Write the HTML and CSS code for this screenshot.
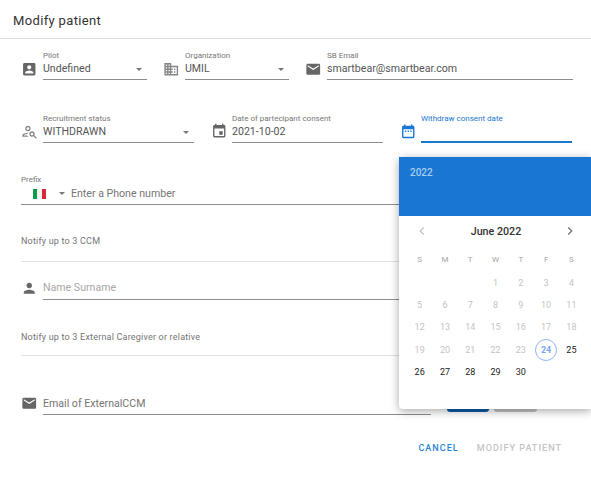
FILE: index.html
```html
<!DOCTYPE html>
<html>
  <head>
    <title>Modify patient</title>
    <meta name="viewport" content="width=device-width, initial-scale=1" />
    <link rel="stylesheet" href="styles.css">
  </head>
  <body>
    <div class="dialog">
      <h1 class="dialog-title">Modify patient</h1>

      <div class="row row-first">
        <div class="group">
          <svg class="icon" viewBox="0 0 24 24"><path d="M3 5v14c0 1.1.89 2 2 2h14c1.1 0 2-.9 2-2V5c0-1.1-.9-2-2-2H5c-1.11 0-2 .9-2 2zm12 4c0 1.66-1.34 3-3 3s-3-1.34-3-3 1.34-3 3-3 3 1.34 3 3zm-9 8c0-2 4-3.1 6-3.1s6 1.1 6 3.1v1H6v-1z"/></svg>
          <div class="field w-small">
            <span class="field-label">Pilot</span>
            <div class="field-value">Undefined<span class="caret"></span></div>
          </div>
        </div>
        <div class="group">
          <svg class="icon icon-light" viewBox="0 0 24 24"><path d="M12 7V3H2v18h20V7H12zM6 19H4v-2h2v2zm0-4H4v-2h2v2zm0-4H4V9h2v2zm0-4H4V5h2v2zm4 12H8v-2h2v2zm0-4H8v-2h2v2zm0-4H8V9h2v2zm0-4H8V5h2v2zm10 12h-8v-2h2v-2h-2v-2h2v-2h-2V9h8v10zm-2-8h-2v2h2v-2zm0 4h-2v2h2v-2z"/></svg>
          <div class="field w-small">
            <span class="field-label">Organization</span>
            <div class="field-value">UMIL<span class="caret"></span></div>
          </div>
        </div>
        <div class="group">
          <svg class="icon" viewBox="0 0 24 24"><path d="M20 4H4c-1.1 0-1.99.9-1.99 2L2 18c0 1.1.9 2 2 2h16c1.1 0 2-.9 2-2V6c0-1.1-.9-2-2-2zm0 4l-8 5-8-5V6l8 5 8-5v2z"/></svg>
          <div class="field w-wide">
            <span class="field-label">SB Email</span>
            <div class="field-value">smartbear@smartbear.com</div>
          </div>
        </div>
      </div>

      <div class="row row-second">
        <div class="group">
          <svg class="icon icon-light" viewBox="0 0 24 24"><path d="M10 12c2.21 0 4-1.79 4-4s-1.79-4-4-4-4 1.79-4 4 1.79 4 4 4zm0-6c1.1 0 2 .9 2 2s-.9 2-2 2-2-.9-2-2 .9-2 2-2zM4 18c.2-.63 2.57-1.68 4.96-1.94l2.04-2c-.39-.04-.68-.06-1-.06-2.67 0-8 1.34-8 4v2h9l-2-2H4zM19.43 18.02c.35-.59.57-1.27.57-2.02 0-2.21-1.79-4-4-4s-4 1.79-4 4 1.79 4 4 4c.74 0 1.43-.22 2.02-.57L21.59 23 23 21.59l-3.57-3.57zM16 18c-1.1 0-2-.9-2-2s.9-2 2-2 2 .9 2 2-.9 2-2 2z"/></svg>
          <div class="field w-mid">
            <span class="field-label">Recruitment status</span>
            <div class="field-value">WITHDRAWN<span class="caret"></span></div>
          </div>
        </div>
        <div class="group">
          <svg class="icon" viewBox="0 0 24 24"><path d="M17 12h-5v5h5v-5zM16 1v2H8V1H6v2H5c-1.11 0-1.99.9-1.99 2L3 19c0 1.1.89 2 2 2h14c1.1 0 2-.9 2-2V5c0-1.1-.9-2-2-2h-1V1h-2zm3 18H5V8h14v11z"/></svg>
          <div class="field w-mid">
            <span class="field-label">Date of partecipant consent</span>
            <div class="field-value">2021-10-02</div>
          </div>
        </div>
        <div class="group">
          <svg class="icon icon-active" viewBox="0 0 24 24"><path d="M9 11H7v2h2v-2zm4 0h-2v2h2v-2zm4 0h-2v2h2v-2zm2-7h-1V2h-2v2H8V2H6v2H5c-1.11 0-1.99.9-1.99 2L3 20c0 1.1.89 2 2 2h14c1.1 0 2-.9 2-2V6c0-1.1-.9-2-2-2zm0 16H5V9h14v11z"/></svg>
          <div class="field w-mid field-active">
            <span class="field-label">Withdraw consent date</span>
            <div class="field-value">&nbsp;</div>
          </div>
        </div>
      </div>

      <div class="phone">
        <span class="field-label phone-label">Prefix</span>
        <div class="phone-input">
          <span class="flag"><i class="flag-green"></i><i class="flag-white"></i><i class="flag-red"></i></span>
          <span class="caret caret-flag"></span>
          <span class="placeholder-dark">Enter a Phone number</span>
        </div>
      </div>

      <div class="section section-ccm">Notify up to 3 CCM</div>

      <div class="row row-person">
        <svg class="icon" viewBox="0 0 24 24"><path d="M12 12c2.21 0 4-1.79 4-4s-1.79-4-4-4-4 1.79-4 4 1.79 4 4 4zm0 2c-2.67 0-8 1.34-8 4v2h16v-2c0-2.66-5.33-4-8-4z"/></svg>
        <div class="plain-input placeholder-light">Name Surname</div>
      </div>

      <div class="section section-care">Notify up to 3 External Caregiver or relative</div>

      <div class="row row-email">
        <svg class="icon" viewBox="0 0 24 24"><path d="M20 4H4c-1.1 0-1.99.9-1.99 2L2 18c0 1.1.9 2 2 2h16c1.1 0 2-.9 2-2V6c0-1.1-.9-2-2-2zm0 4l-8 5-8-5V6l8 5 8-5v2z"/></svg>
        <div class="plain-input plain-short placeholder-dark">Email of ExternalCCM</div>
        <span class="hidden-btn hidden-btn-blue"></span>
        <span class="hidden-btn hidden-btn-grey"></span>
      </div>

      <div class="actions">
        <span class="action action-cancel">CANCEL</span>
        <span class="action action-off">MODIFY PATIENT</span>
      </div>

      <div class="picker">
        <div class="picker-head">2022</div>
        <div class="picker-month">
          <svg class="chevron chevron-off" viewBox="0 0 24 24"><path d="M15.41 7.41L14 6l-6 6 6 6 1.41-1.41L10.83 12z"/></svg>
          <span>June 2022</span>
          <svg class="chevron" viewBox="0 0 24 24"><path d="M10 6L8.59 7.41 13.17 12l-4.58 4.59L10 18l6-6z"/></svg>
        </div>
        <div class="weekdays">
          <span>S</span><span>M</span><span>T</span><span>W</span><span>T</span><span>F</span><span>S</span>
        </div>
        <div class="days">
          <span></span><span></span><span></span>
          <span class="off">1</span><span class="off">2</span><span class="off">3</span><span class="off">4</span>
          <span class="off">5</span><span class="off">6</span><span class="off">7</span><span class="off">8</span><span class="off">9</span><span class="off">10</span><span class="off">11</span>
          <span class="off">12</span><span class="off">13</span><span class="off">14</span><span class="off">15</span><span class="off">16</span><span class="off">17</span><span class="off">18</span>
          <span class="off">19</span><span class="off">20</span><span class="off">21</span><span class="off">22</span><span class="off">23</span><span class="today">24</span><span>25</span>
          <span>26</span><span>27</span><span>28</span><span>29</span><span>30</span>
        </div>
      </div>
    </div>
  </body>
</html>
```

FILE: styles.css
```css
html, body {
  height: 100%;
}

body {
  margin: 0;
  overflow: hidden;
  background-color: #fff;
  font-family: Roboto, Arial, sans-serif;
  color: #555;
}

.dialog {
  position: relative;
  height: 483px;
  overflow: hidden;
}

.dialog-title {
  margin: 0;
  height: 38px;
  padding-left: 13px;
  border-bottom: 1px solid #e0e0e0;
  box-sizing: content-box;
  font-size: 13px;
  font-weight: 400;
  line-height: 41px;
  letter-spacing: 0.35px;
  color: #333;
}

.row {
  display: flex;
  align-items: flex-end;
}

.row-first {
  margin-top: 12px;
  padding-left: 20px;
  gap: 15px;
}

.row-second {
  margin-top: 34px;
  padding-left: 20px;
  gap: 16px;
}

.group {
  display: flex;
  align-items: flex-end;
  gap: 5px;
}

.row-second .group + .group {
  gap: 4px;
}

.icon {
  width: 16.5px;
  height: 16.5px;
  margin: 0 0.75px 2.5px;
  fill: #666;
  flex: none;
}

.row-second .icon {
  margin-bottom: 4px;
}

.row-person .icon {
  margin-bottom: 3.75px;
}

.row-email .icon {
  margin-bottom: 3.25px;
}

.icon-light {
  fill: #858585;
}

.icon.icon-active {
  fill: #1976d2;
}

.field {
  height: 28px;
  border-bottom: 1px solid #8c8c8c;
}

.w-small {
  width: 104px;
}

.w-mid {
  width: 151px;
}

.w-wide {
  width: 246px;
}

.field-label {
  display: block;
  height: 10px;
  font-size: 8px;
  line-height: 10px;
  color: #777;
}

.field-value {
  position: relative;
  font-size: 10.6px;
  line-height: 16px;
  color: #555;
}

.field-active {
  border-bottom: 2px solid #1976d2;
  height: 27px;
}

.field-active .field-label {
  color: #1976d2;
}

.caret {
  display: block;
  position: absolute;
  right: 5px;
  top: 7px;
  width: 0;
  height: 0;
  border-left: 3.5px solid transparent;
  border-right: 3.5px solid transparent;
  border-top: 3.5px solid #777;
}

.caret-flag {
  position: static;
  margin: 0 6px 0 13px;
}

.phone {
  margin: 32px 0 0 21px;
  width: 551px;
}

.phone-label {
  height: 11px;
}

.phone-input {
  display: flex;
  align-items: center;
  height: 15px;
  padding: 0 0 3px 12px;
  border-bottom: 1px solid #8c8c8c;
  box-sizing: content-box;
}

.flag {
  display: flex;
  width: 13px;
  height: 10px;
}

.flag i {
  flex: 1;
}

.flag-green {
  background-color: #0a9a4c;
}

.flag-white {
  background-color: #f2f2f2;
}

.flag-red {
  background-color: #d9283c;
}

.placeholder-dark {
  font-size: 10.6px;
  color: #757575;
}

.placeholder-light {
  font-size: 10.6px;
  color: #a8a8a8;
}

.section {
  margin-left: 21px;
  width: 551px;
  border-bottom: 1px solid #e0e0e0;
  font-size: 9px;
  letter-spacing: 0.2px;
  line-height: 12px;
  color: #757575;
}

.section-ccm {
  margin-top: 30px;
  padding-bottom: 14px;
}

.section-care {
  margin-top: 31px;
  padding-bottom: 12px;
}

.row-person {
  margin-top: 16px;
  padding-left: 20px;
  gap: 5px;
}

.row-email {
  position: relative;
  margin-top: 37px;
  padding-left: 20px;
  gap: 5px;
}

.plain-input {
  display: flex;
  align-items: center;
  width: 530px;
  height: 22px;
  padding-bottom: 2px;
  box-sizing: border-box;
  border-bottom: 1px solid #8c8c8c;
}

.plain-short {
  width: 388px;
  padding-bottom: 0;
}

.hidden-btn {
  position: absolute;
  bottom: 3px;
  height: 22px;
  border-radius: 3px;
}

.hidden-btn-blue {
  left: 447px;
  width: 42px;
  background-color: #0d5ca8;
}

.hidden-btn-grey {
  left: 494px;
  width: 43px;
  background-color: #c4c4c4;
}

.actions {
  display: flex;
  justify-content: flex-end;
  gap: 18px;
  margin-top: 27px;
  padding-right: 29px;
  font-size: 9px;
  font-weight: 500;
  letter-spacing: 1.05px;
  line-height: 12px;
}

.action-cancel {
  color: #2a82d8;
}

.action-off {
  color: #c4c4c4;
}

.picker {
  position: absolute;
  left: 399px;
  top: 157px;
  width: 192px;
  height: 252px;
  background-color: #fff;
  border-radius: 4px 0 0 4px;
  box-shadow: 0px 2px 10px rgba(0, 0, 0, 0.35);
}

.picker-head {
  height: 59px;
  padding: 9px 0 0 11px;
  box-sizing: border-box;
  background-color: #1976d2;
  color: #a9cdf0;
  font-size: 10px;
  font-weight: 500;
  line-height: 14px;
}

.picker-month {
  display: flex;
  align-items: center;
  justify-content: space-between;
  height: 30px;
  padding: 0 13px 0 15px;
  font-size: 10.7px;
  font-weight: 500;
  color: #333;
}

.chevron {
  width: 16px;
  height: 16px;
  fill: #777;
}

.chevron-off {
  fill: #c4c4c4;
}

.weekdays,
.days {
  display: grid;
  grid-template-columns: repeat(7, 25.3px);
  padding-left: 8px;
  text-align: center;
}

.weekdays {
  margin-top: 6px;
  font-size: 8px;
  line-height: 16px;
  color: #a6a6a6;
}

.days {
  margin-top: 4px;
  grid-auto-rows: 22.2px;
  font-size: 9px;
  line-height: 22.2px;
  color: #222;
}

.days .off {
  color: #c4c4c4;
}

.days .today {
  justify-self: center;
  width: 20px;
  height: 20px;
  margin-top: 0;
  border: 1px solid #8fb4f8;
  border-radius: 50%;
  color: #7ba6f2;
  font-weight: 700;
  line-height: 20px;
}
```
